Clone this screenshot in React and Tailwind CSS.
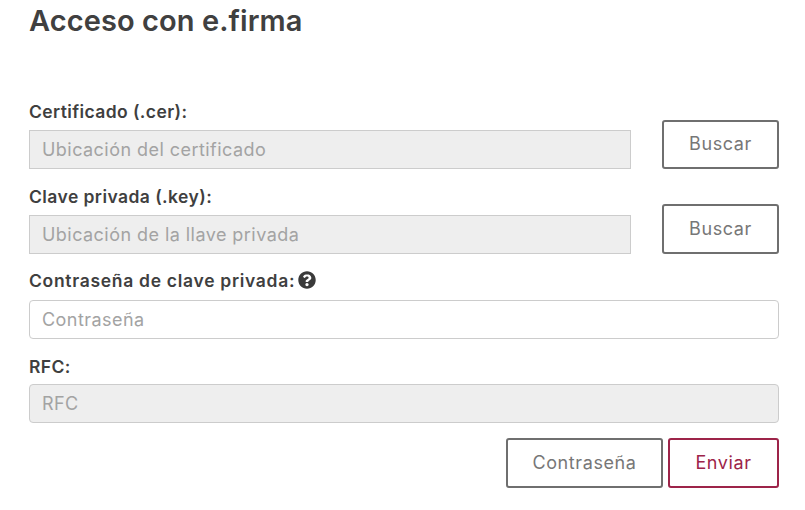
const font = "font-['Inter','Noto_Sans',sans-serif]";

function Label({ children, className = "" }) {
  return (
    <div className={`h-[20px] flex items-center text-[17.5px] leading-[20px] font-semibold text-[#3f3f3f] ${className}`}>
      {children}
    </div>
  );
}

function Field({ placeholder, disabled, rounded, className = "" }) {
  return (
    <div
      className={`h-[39px] border border-[#cccccc] flex items-center pl-[12px] text-[18px] tracking-[0.45px] text-[#a3a3a3] ${disabled ? "bg-[#eeeeee]" : "bg-white"} ${rounded ? "rounded-[4px]" : ""} ${className}`}
    >
      {placeholder}
    </div>
  );
}

function Btn({ children, className = "" }) {
  return (
    <button className={`border-2 rounded-[3px] bg-white flex items-center justify-center pb-[2px] text-[18px] tracking-[0.6px] ${className}`}>
      {children}
    </button>
  );
}

export default function App() {
  return (
    <div className={`w-[805px] h-[510px] bg-white overflow-hidden pl-[29px] pr-[26px] ${font}`}>
      <h1 className="h-[42px] flex items-center text-[29px] leading-[42px] font-semibold tracking-[0.08px] text-[#404040]">
        Acceso con e.firma
      </h1>
      <div className="flex items-end gap-[31px] mt-[60px]">
        <div className="flex-1">
          <Label className="mb-[8px] tracking-[0.4px]">Certificado (.cer):</Label>
          <Field placeholder="Ubicación del certificado" disabled />
        </div>
        <Btn className="w-[117px] h-[49px] border-[#6f6f6f] text-[#777777]">Buscar</Btn>
      </div>
      <div className="flex items-end gap-[31px] mt-[18px]">
        <div className="flex-1">
          <Label className="mb-[8px] tracking-[0.43px]">Clave privada (.key):</Label>
          <Field placeholder="Ubicación de la llave privada" disabled />
        </div>
        <Btn className="w-[117px] h-[50px] border-[#6f6f6f] text-[#777777]">Buscar</Btn>
      </div>
      <Label className="mt-[17px] mb-[9px] gap-[3px] tracking-[0.7px]">
        Contraseña de clave privada:
        <svg width="18" height="18" viewBox="0 0 512 512" className="mb-[3px]" fill="#3a3a3a">
          <path d="M504 256c0 137-111 248-248 248S8 393 8 256 119 8 256 8s248 111 248 248zM262.700 90c-54.500 0-89.300 23-116.500 63.800-3.500 5.300-2.400 12.400 2.700 16.300l34.700 26.300c5.200 3.900 12.600 3 16.700-2.100 17.900-22.700 30.100-35.800 57.300-35.800 20.400 0 45.700 13.100 45.700 33 0 15-12.400 22.700-32.600 34-23.600 13.200-54.800 29.700-54.800 70.900V300c0 6.600 5.400 12 12 12h56c6.600 0 12-5.400 12-12v-1.300c0-28.600 83.500-29.800 83.500-107.200 0-58.300-60.500-102.500-117.200-102.500zM256 339c-25.500 0-46.200 20.700-46.200 46.200s20.700 46.200 46.200 46.200 46.200-20.700 46.200-46.200S281.500 339 256 339z" />
        </svg>
      </Label>
      <Field placeholder="Contraseña" rounded />
      <Label className="mt-[18px] mb-[7px] tracking-[0.4px]">RFC:</Label>
      <Field placeholder="RFC" disabled rounded />
      <div className="flex justify-end gap-[5px] mt-[15px]">
        <Btn className="w-[157px] h-[50px] border-[#6f6f6f] text-[#777777]">Contraseña</Btn>
        <Btn className="w-[111px] h-[50px] border-[#9d2449] text-[#9d2449]">Enviar</Btn>
      </div>
    </div>
  );
}
